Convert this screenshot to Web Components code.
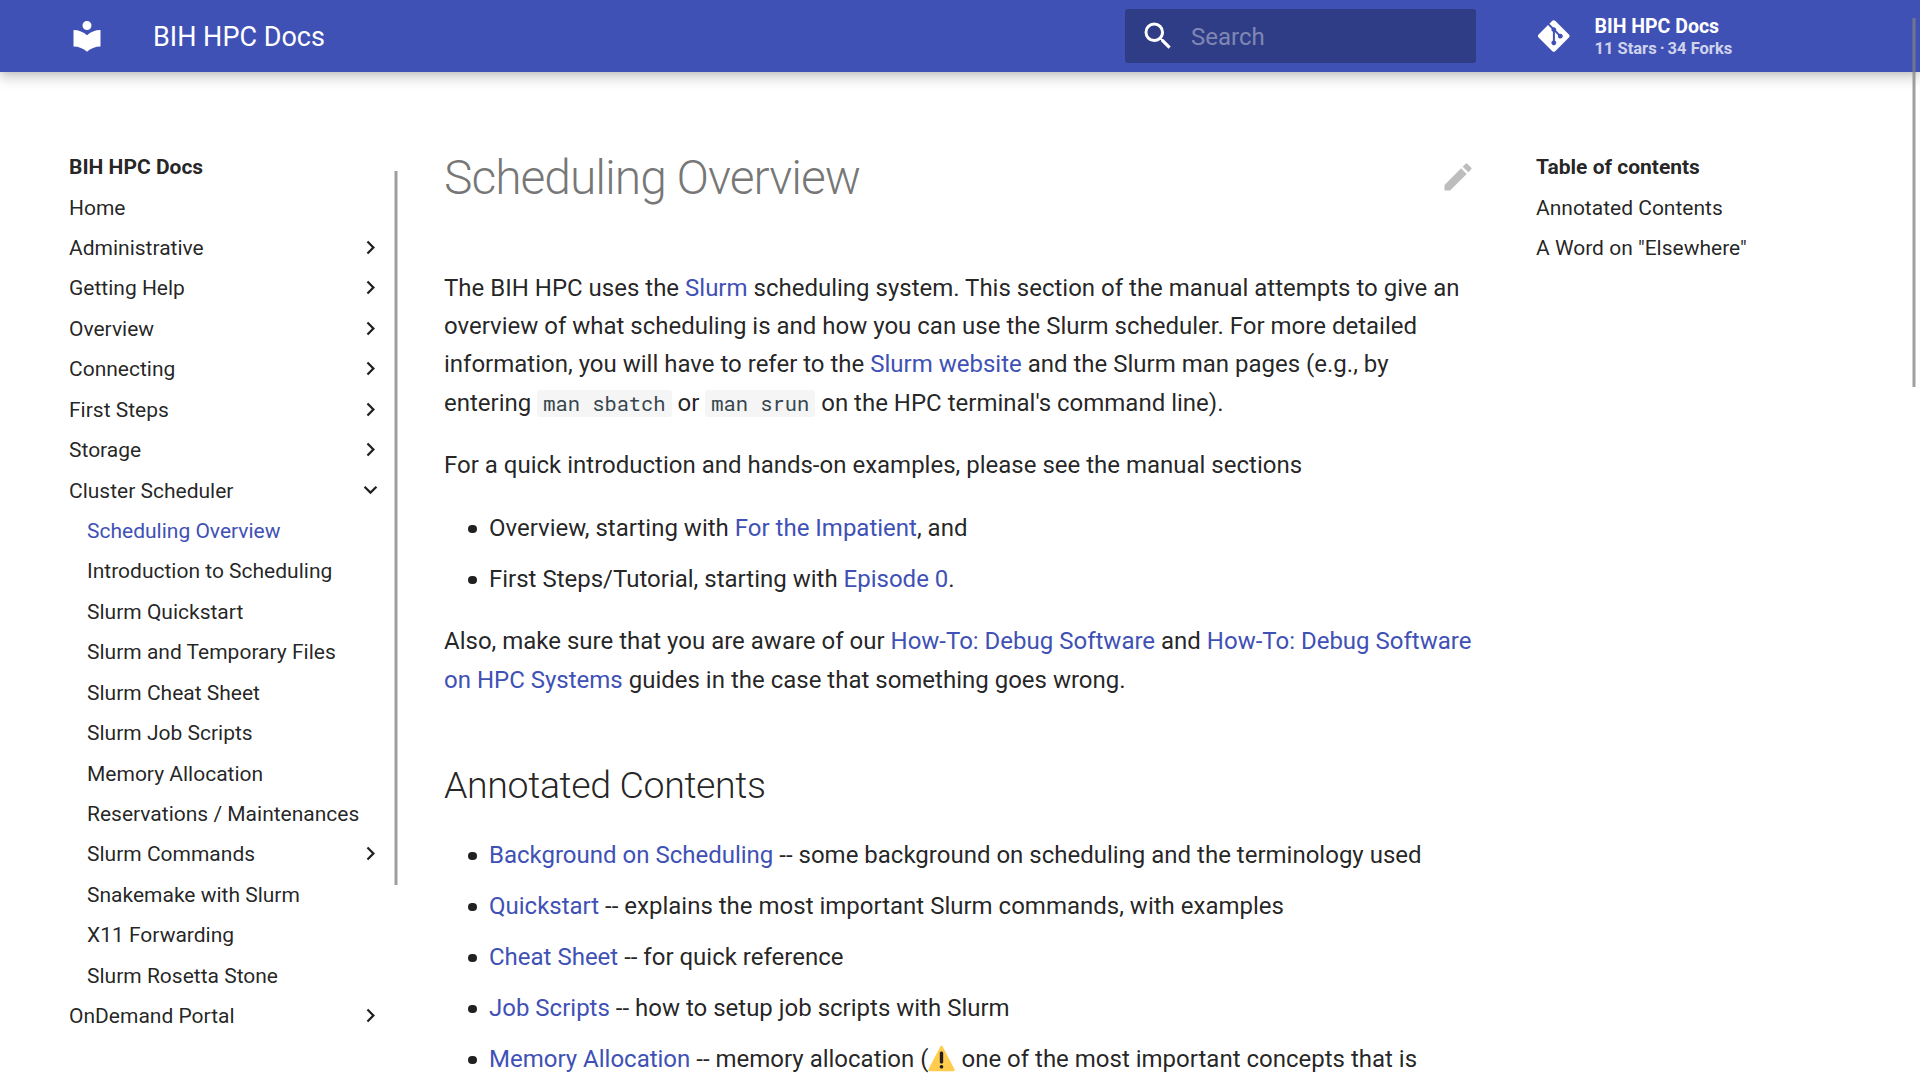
<!DOCTYPE html>
<html lang="en">
<head>
<meta charset="utf-8">
<title>Scheduling Overview - BIH HPC Docs</title>
<style>
html,body{margin:0;height:100%;overflow:hidden;background:#fff}
body{font-family:Roboto,"Liberation Sans",sans-serif;font-size:24px;line-height:38.4px;color:rgba(0,0,0,.87);font-feature-settings:"kern","liga"}
</style>
</head>
<body>
<docs-app></docs-app>
<script>
const ICONS = {
  library: ['0 0 24 24','M12 8a3 3 0 0 0 3-3 3 3 0 0 0-3-3 3 3 0 0 0-3 3 3 3 0 0 0 3 3m0 3.54C9.64 9.35 6.5 8 3 8v11c3.5 0 6.64 1.35 9 3.54 2.36-2.19 5.5-3.54 9-3.54V8c-3.5 0-6.64 1.35-9 3.54Z'],
  magnify: ['0 0 24 24','M9.5 3A6.5 6.5 0 0 1 16 9.5c0 1.61-.59 3.09-1.56 4.23l.27.27h.79l5 5-1.5 1.5-5-5v-.79l-.27-.27A6.516 6.516 0 0 1 9.5 16 6.5 6.5 0 0 1 3 9.5 6.5 6.5 0 0 1 9.5 3m0 2C7 5 5 7 5 9.5S7 14 9.5 14 14 12 14 9.5 12 5 9.5 5Z'],
  pencil: ['0 0 24 24','M20.71 7.04c.39-.39.39-1.04 0-1.41l-2.34-2.34c-.37-.39-1.02-.39-1.41 0l-1.84 1.83 3.75 3.75M3 17.25V21h3.75L17.81 9.93l-3.75-3.75L3 17.25Z'],
  chevron: ['0 0 24 24','M8.59 16.58 13.17 12 8.59 7.41 10 6l6 6-6 6-1.41-1.42Z'],
  git: ['0 0 448 512','M439.55 236.05 244 40.45a28.87 28.87 0 0 0-40.81 0l-40.66 40.63 51.52 51.52c27.06-9.14 52.68 16.77 43.39 43.68l49.66 49.66c34.23-11.8 61.18 31 35.47 56.69-26.49 26.49-70.21-2.87-56-37.34L240.22 199v121.85c25.3 12.54 22.26 41.85 9.08 55a34.34 34.34 0 0 1-48.55 0c-17.57-17.6-11.07-46.91 11.25-56v-123c-20.8-8.51-24.6-30.74-18.64-45L142.57 101 8.45 235.14a28.86 28.86 0 0 0 0 40.81l195.61 195.6a28.86 28.86 0 0 0 40.8 0l194.69-194.69a28.86 28.86 0 0 0 0-40.81z']
};

function define(name, html) {
  customElements.define(name, class extends HTMLElement {
    constructor() {
      super();
      const t = document.createElement('template');
      t.innerHTML = html;
      this.attachShadow({mode: 'open'}).append(t.content.cloneNode(true));
    }
  });
}

customElements.define('md-icon', class extends HTMLElement {
  connectedCallback() {
    const [box, d] = ICONS[this.getAttribute('name')];
    (this.shadowRoot || this.attachShadow({mode: 'open'})).innerHTML =
      `<style>:host{display:block;flex:none;width:36px;height:36px}svg{display:block;width:100%;height:100%;fill:currentColor}</style>
       <svg viewBox="${box}"><path d="${d}"/></svg>`;
  }
});

define('warning-emoji', `<style>:host{display:inline-block;width:27px;height:27px;margin:0 .5px 0 -.5px;vertical-align:text-top}svg{display:block}</style>
<svg width="27" height="27" viewBox="0 0 36 36"><path fill="#FFCC4D" d="M2.653 35C.811 35-.001 33.662.847 32.027L16.456 1.972c.849-1.635 2.238-1.635 3.087 0l15.609 30.056c.85 1.634.037 2.972-1.805 2.972H2.653z"/><path fill="#231F20" d="M15.583 28.953c0-1.333 1.085-2.418 2.419-2.418 1.333 0 2.418 1.085 2.418 2.418 0 1.334-1.086 2.419-2.418 2.419-1.334 0-2.419-1.085-2.419-2.419zm.186-18.293c0-1.302.961-2.108 2.232-2.108 1.241 0 2.233.837 2.233 2.108v11.938c0 1.271-.992 2.108-2.233 2.108-1.271 0-2.232-.807-2.232-2.108V10.66z"/></svg>`);

define('search-box', `<style>
:host{display:flex;align-items:center;box-sizing:border-box;width:351px;height:54px;padding-left:15px;border-radius:3px;background:rgba(0,0,0,.26);color:#fff}
span{margin-left:15px;padding-top:2px;color:rgba(255,255,255,.4)}
</style><md-icon name="magnify"></md-icon><span>Search</span>`);

define('repo-facts', `<style>
:host{display:flex;align-items:center;color:#fff;font-weight:700;font-size:19.5px;line-height:24px}
md-icon{width:31.5px}
.t{margin-left:25px;padding-top:1px}
.f{font-size:16.5px;line-height:20px;color:rgba(255,255,255,.75)}
.f i{font-style:normal;margin:0 3px}
</style><md-icon name="git"></md-icon><div class="t"><div>BIH HPC Docs</div><div class="f">11 Stars<i>·</i>34 Forks</div></div>`);

define('site-header', `<style>
:host{display:block;position:relative;z-index:2;flex:none;height:72px;background:#4051b5;color:#fff;box-shadow:0 0 6px rgba(0,0,0,.1),0 6px 12px rgba(0,0,0,.2)}
.in{display:flex;align-items:center;height:72px;width:1830px;margin:0 auto;box-sizing:border-box;padding-left:24px}
.t{flex:1;margin-left:48px;padding-top:2px;font-size:27px;line-height:72px}
search-box{margin-right:62px}
repo-facts{width:337px}
</style><div class="in"><md-icon name="library"></md-icon><div class="t">BIH HPC Docs</div><search-box></search-box><repo-facts></repo-facts></div>`);

define('nav-title', `<style>:host{display:block;font-weight:700;padding-top:1px;margin-bottom:-1px}</style><slot></slot>`);
define('nav-item', `<style>
:host{display:flex;justify-content:space-between;align-items:center;margin-top:13.125px;height:27.3px;white-space:nowrap}
:host([sub]){padding-left:18px}
:host([active]){color:#4051b5}
span{padding-top:2.45px}
md-icon{width:27px;height:27px;display:none}
:host([more]) md-icon,:host([open]) md-icon{display:block}
:host([open]) md-icon{transform:translateY(-.7px) rotate(90deg)}
</style><span><slot></slot></span><md-icon name="chevron"></md-icon>`);
define('side-nav', `<style>
:host{display:flex;justify-content:space-between;align-items:flex-start;flex:none;box-sizing:border-box;width:363px;padding:36px 10px 0 24px;font-size:21px;line-height:27.3px}
nav{width:315px}
.bar{box-sizing:border-box;width:4px;height:713.5px;margin-top:18px;background:#9e9e9e;border:solid #cfcfcf;border-width:0 1px}
:host([plain]) .bar{display:none}
</style><nav><slot></slot></nav><div class="bar"></div>`);

define('code-span', `<style>:host{font-family:"Roboto Mono","DejaVu Sans Mono",monospace;font-size:20.4px;color:#36464e;background:#f5f5f5;border-radius:3px;padding:0 6px;word-break:break-word}</style><slot></slot>`);
define('text-link', `<style>:host{color:#4051b5}</style><slot></slot>`);
define('bullet-item', `<style>
:host{display:block;line-height:39px;margin:0 0 12px 30px}
:host(:last-of-type){margin-bottom:0}
:host::before{content:"";display:inline-block;width:8.2px;height:8.2px;border-radius:50%;background:currentColor;margin:0 12.4px 0 -20.6px;vertical-align:2.8px}
</style><slot></slot>`);
define('bullet-list', `<style>:host{display:flow-root;margin:24px 0 23px 15px}</style><slot></slot>`);

define('doc-article', `<style>
:host{display:block;flex:none;box-sizing:border-box;width:1104px;padding:30px 36px 0}
.head{display:flex;justify-content:space-between;align-items:center;margin-bottom:59.15px;height:62.4px}
h1{margin:0;font-weight:300;font-size:48px;line-height:62.4px;letter-spacing:-1.02px;color:rgba(0,0,0,.54)}
.head md-icon{color:rgba(0,0,0,.26);margin-bottom:2px}
h2{margin:60px 0 24px;font-weight:300;font-size:37.5px;line-height:52.5px;letter-spacing:-.375px}
p{margin:24px 0}
.lead{margin-bottom:22.9px}
.lead + p{margin:0 0 24.75px}
.after{margin-top:23px}
</style>
<div class="head"><h1>Scheduling Overview</h1><md-icon name="pencil"></md-icon></div>
<p class="lead">The BIH HPC uses the <text-link>Slurm</text-link> scheduling system. This section of the manual attempts to give an overview of what scheduling is and how you can use the Slurm scheduler. For more detailed information, you will have to refer to the <text-link>Slurm website</text-link> and the Slurm man pages (e.g., by entering <code-span>man sbatch</code-span> or <code-span>man srun</code-span> on the HPC terminal's command line).</p>
<p>For a quick introduction and hands-on examples, please see the manual sections</p>
<bullet-list>
<bullet-item>Overview, starting with <text-link>For the Impatient</text-link>, and</bullet-item>
<bullet-item>First Steps/Tutorial, starting with <text-link>Episode 0</text-link>.</bullet-item>
</bullet-list>
<p class="after">Also, make sure that you are aware of our <text-link>How-To: Debug Software</text-link> and <text-link>How-To: Debug Software on HPC Systems</text-link> guides in the case that something goes wrong.</p>
<h2>Annotated Contents</h2>
<bullet-list>
<bullet-item><text-link>Background on Scheduling</text-link> -- some background on scheduling and the terminology used</bullet-item>
<bullet-item><text-link>Quickstart</text-link> -- explains the most important Slurm commands, with examples</bullet-item>
<bullet-item><text-link>Cheat Sheet</text-link> -- for quick reference</bullet-item>
<bullet-item><text-link>Job Scripts</text-link> -- how to setup job scripts with Slurm</bullet-item>
<bullet-item><text-link>Memory Allocation</text-link> -- memory allocation (<warning-emoji></warning-emoji> one of the most important concepts that is</bullet-item>
</bullet-list>`);

define('page-scrollbar', `<style>:host{display:block;position:absolute;z-index:3;right:4px;top:18px;box-sizing:border-box;width:4px;height:369px;background:rgba(128,128,128,.75);background-clip:padding-box;border:solid rgba(128,128,128,.38);border-width:0 1px}</style>`);

define('docs-app', `<style>
:host{display:flex;flex-direction:column;position:relative;height:1080px;overflow:hidden}
main{display:flex;width:1830px;margin:45px auto 0}
</style>
<site-header></site-header>
<main>
<side-nav>
<nav-title>BIH HPC Docs</nav-title>
<nav-item>Home</nav-item>
<nav-item more>Administrative</nav-item>
<nav-item more>Getting Help</nav-item>
<nav-item more>Overview</nav-item>
<nav-item more>Connecting</nav-item>
<nav-item more>First Steps</nav-item>
<nav-item more>Storage</nav-item>
<nav-item open>Cluster Scheduler</nav-item>
<nav-item sub active>Scheduling Overview</nav-item>
<nav-item sub>Introduction to Scheduling</nav-item>
<nav-item sub>Slurm Quickstart</nav-item>
<nav-item sub>Slurm and Temporary Files</nav-item>
<nav-item sub>Slurm Cheat Sheet</nav-item>
<nav-item sub>Slurm Job Scripts</nav-item>
<nav-item sub>Memory Allocation</nav-item>
<nav-item sub>Reservations / Maintenances</nav-item>
<nav-item sub more>Slurm Commands</nav-item>
<nav-item sub>Snakemake with Slurm</nav-item>
<nav-item sub>X11 Forwarding</nav-item>
<nav-item sub>Slurm Rosetta Stone</nav-item>
<nav-item more>OnDemand Portal</nav-item>
</side-nav>
<doc-article></doc-article>
<side-nav plain>
<nav-title>Table of contents</nav-title>
<nav-item>Annotated Contents</nav-item>
<nav-item>A Word on "Elsewhere"</nav-item>
</side-nav>
</main>
<page-scrollbar></page-scrollbar>`);
</script>
</body>
</html>
